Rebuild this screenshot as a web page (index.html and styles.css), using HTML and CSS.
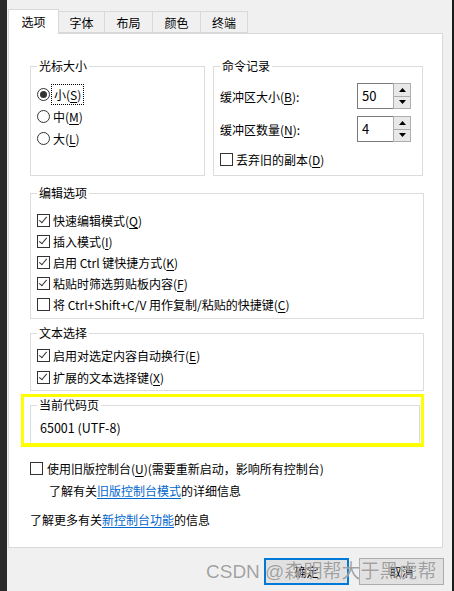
FILE: index.html
```html
<!DOCTYPE html>
<html lang="zh-CN">
<head>
  <meta charset="UTF-8">
  <title>属性 - 选项</title>
  <link rel="stylesheet" href="styles.css">
</head>
<body>
  <div class="screen">
    <div class="edge-left"></div>
    <div class="dialog">
      <!-- Tabs -->
      <div class="tabs">
        <div class="tab active">选项</div>
        <div class="tab w46">字体</div>
        <div class="tab w48">布局</div>
        <div class="tab w48">颜色</div>
        <div class="tab w47">终端</div>
      </div>

      <div class="panel">
        <div class="row-top">
          <!-- Cursor size -->
          <fieldset class="group cursor">
            <legend>光标大小</legend>
            <div class="group-body">
              <div class="opt"><span class="radio checked"></span><span class="focus">小(<u>S</u>)</span></div>
              <div class="opt"><span class="radio"></span><span>中(<u>M</u>)</span></div>
              <div class="opt"><span class="radio"></span><span>大(<u>L</u>)</span></div>
            </div>
          </fieldset>

          <!-- Command history -->
          <fieldset class="group history">
            <legend>命令记录</legend>
            <div class="group-body">
              <div class="spin-row">
                <span>缓冲区大小(<u>B</u>):</span>
                <div class="spin">
                  <div class="spin-input">50</div>
                  <div class="spin-btns">
                    <span class="spin-btn"><svg width="7" height="4" viewBox="0 0 7 4"><polygon points="3.5,0 7,4 0,4" fill="#000"/></svg></span>
                    <span class="spin-btn"><svg width="7" height="4" viewBox="0 0 7 4"><polygon points="0,0 7,0 3.5,4" fill="#000"/></svg></span>
                  </div>
                </div>
              </div>
              <div class="spin-row">
                <span>缓冲区数量(<u>N</u>):</span>
                <div class="spin">
                  <div class="spin-input">4</div>
                  <div class="spin-btns">
                    <span class="spin-btn"><svg width="7" height="4" viewBox="0 0 7 4"><polygon points="3.5,0 7,4 0,4" fill="#000"/></svg></span>
                    <span class="spin-btn"><svg width="7" height="4" viewBox="0 0 7 4"><polygon points="0,0 7,0 3.5,4" fill="#000"/></svg></span>
                  </div>
                </div>
              </div>
              <div class="opt discard"><span class="check"></span><span>丢弃旧的副本(<u>D</u>)</span></div>
            </div>
          </fieldset>
        </div>

        <!-- Edit options -->
        <fieldset class="group edit">
          <legend>编辑选项</legend>
          <div class="group-body">
            <div class="opt"><span class="check on"></span><span>快速编辑模式(<u>Q</u>)</span></div>
            <div class="opt"><span class="check on"></span><span>插入模式(<u>I</u>)</span></div>
            <div class="opt"><span class="check on"></span><span>启用 Ctrl 键快捷方式(<u>K</u>)</span></div>
            <div class="opt"><span class="check on"></span><span>粘贴时筛选剪贴板内容(<u>F</u>)</span></div>
            <div class="opt"><span class="check"></span><span>将 Ctrl+Shift+C/V 用作复制/粘贴的快捷键(<u>C</u>)</span></div>
          </div>
        </fieldset>

        <!-- Text selection -->
        <fieldset class="group select">
          <legend>文本选择</legend>
          <div class="group-body">
            <div class="opt"><span class="check on"></span><span>启用对选定内容自动换行(<u>E</u>)</span></div>
            <div class="opt"><span class="check on"></span><span>扩展的文本选择键(<u>X</u>)</span></div>
          </div>
        </fieldset>

        <!-- Code page (highlighted) -->
        <div class="highlight">
          <fieldset class="group codepage">
            <legend>当前代码页</legend>
            <div class="group-body">65001 (UTF-8)</div>
          </fieldset>
        </div>

        <div class="opt legacy"><span class="check"></span><span>使用旧版控制台(<u>U</u>)(需要重新启动，影响所有控制台)</span></div>
        <p class="info indent">了解有关<a href="#">旧版控制台模式</a>的详细信息</p>
        <p class="info">了解更多有关<a href="#">新控制台功能</a>的信息</p>
      </div>

      <div class="buttons">
        <button class="btn ok">确定</button>
        <button class="btn cancel">取消</button>
      </div>
    </div>
    <div class="edge-right"></div>
    <div class="watermark">CSDN @森明帮大于黑虎帮</div>
  </div>
</body>
</html>
```

FILE: styles.css
```css
body {
  margin: 0;
  background: #1f1f1f;
  font-family: "Noto Sans CJK SC", "Noto Sans", sans-serif;
  font-size: 12px;
  color: #000;
}

.screen {
  position: relative;
  display: flex;
  width: 454px;
  height: 591px;
  overflow: hidden;
}

.edge-left {
  width: 7px;
  background: #2a2a2a;
}

.edge-right {
  flex: 1;
  background: #1c1c1c;
}

.dialog {
  width: 445px;
  background: #f0f0f0;
  padding: 9px 0 0 1px;
  box-sizing: border-box;
}

/* Tabs */
.tabs {
  display: flex;
  align-items: flex-end;
  height: 25px;
  margin-bottom: -1px;
  position: relative;
  z-index: 1;
}

.tab {
  height: 22px;
  line-height: 21px;
  text-align: center;
  border: 1px solid #d9d9d9;
  border-left: none;
  border-bottom: 1px solid #d9d9d9;
  background: #f0f0f0;
  box-sizing: border-box;
  margin-bottom: 1px;

  &.active {
    width: 51px;
    height: 25px;
    line-height: 23px;
    background: #fff;
    border-left: 1px solid #d9d9d9;
    border-bottom: none;
    margin-bottom: 0;
  }

  &.w46 { width: 46px; }
  &.w48 { width: 48px; }
  &.w47 { width: 47px; }
}

/* Panel */
.panel {
  width: 435px;
  height: 515px;
  background: #fff;
  border: 1px solid #d9d9d9;
  box-sizing: border-box;
  padding: 24px 0 0 21px;
}

.row-top {
  display: flex;
  gap: 8px;
}

.group {
  margin: 0;
  padding: 0;
  min-width: 0;
  border: 1px solid #dcdcdc;
  box-sizing: border-box;

  legend {
    margin-left: 6px;
    padding: 0 2px;
    line-height: 16px;
  }

  .group-body {
    padding: 0 6px;
  }
}

.cursor {
  width: 175px;
  height: 118px;

  .group-body { padding-top: 9px; }
  .opt { height: 22px; }
}

.history {
  width: 210px;
  height: 118px;

  .group-body { padding: 9px 11px 0 6px; }
}

.edit {
  width: 394px;
  margin-top: 9px;

  .group-body { padding-top: 9px; padding-bottom: 3px; }
}

.select {
  width: 394px;
  margin-top: 6px;

  .group-body { padding-top: 3px; padding-bottom: 2px; }
  .opt { height: 22px; }
}

.highlight {
  width: 403px;
  margin: 3px 0 0 -9px;
  border: 3px solid #ffff00;
  border-bottom-width: 4px;
  padding: 0 1px 0 6px;
  box-sizing: border-box;
}

.codepage {
  width: 390px;
  border-bottom-color: transparent;

  .group-body {
    padding: 7px 9px 6px;
    line-height: 16px;
    font-size: 12.5px;
  }
}

/* Options */
.opt {
  display: flex;
  align-items: center;
  gap: 3px;
  height: 21px;
  white-space: nowrap;
}

u {
  text-decoration: underline;
  text-underline-offset: 2px;
}

.radio {
  width: 13px;
  height: 13px;
  border: 1px solid #333;
  border-radius: 50%;
  box-sizing: border-box;
  display: flex;
  align-items: center;
  justify-content: center;

  &.checked::after {
    content: "";
    width: 7px;
    height: 7px;
    border-radius: 50%;
    background: #333;
  }
}

.focus {
  outline: 1px dotted #000;
  outline-offset: 1px;
  padding: 0 1px;
}

.check {
  width: 13px;
  height: 13px;
  border: 1px solid #333;
  box-sizing: border-box;
  background: #fff;
  flex-shrink: 0;
  position: relative;

  &.on::after {
    content: "";
    position: absolute;
    left: 3px;
    top: 0px;
    width: 3px;
    height: 7px;
    border: solid #333;
    border-width: 0 1.3px 1.3px 0;
    transform: rotate(40deg);
  }
}

/* Spinners */
.spin-row {
  display: flex;
  align-items: center;
  justify-content: space-between;
  height: 26px;
  margin-bottom: 7px;
}

.spin {
  display: flex;
  height: 26px;
}

.spin-input {
  width: 36px;
  border: 1px solid #7a7a7a;
  border-right: none;
  box-sizing: border-box;
  padding-left: 4px;
  font-size: 13px;
  line-height: 24px;
}

.spin-btns {
  width: 18px;
  display: flex;
  flex-direction: column;
}

.spin-btn {
  flex: 1;
  display: flex;
  align-items: center;
  justify-content: center;
  background: #e8e8e8;
  border: 1px solid #adadad;
  box-sizing: border-box;

  & + .spin-btn { border-top: none; }
}

.discard {
  margin-top: 2px;
}

/* Bottom texts */
.legacy {
  margin-top: 13px;
  height: 16px;
  gap: 4px;
}

.info {
  margin: 13px 0 0;
  line-height: 16px;

  &.indent {
    margin: 7px 0 0 19px;
  }

  a {
    color: #0066cc;
    text-decoration: underline;
    text-underline-offset: 2px;
  }
}

/* Buttons */
.buttons {
  display: flex;
  justify-content: flex-end;
  gap: 10px;
  margin-top: 10px;
  padding-right: 8px;
}

.btn {
  height: 27px;
  font-family: inherit;
  font-size: 12px;
  background: #e1e1e1;
  border: 1px solid #adadad;
  padding: 0;

  &.ok {
    width: 85px;
    border: 2px solid #0078d7;
  }

  &.cancel {
    width: 85px;
  }
}

.watermark {
  position: absolute;
  left: 206px;
  top: 559px;
  font-family: "Liberation Sans", "Noto Sans CJK SC", sans-serif;
  font-size: 19px;
  line-height: 26px;
  color: rgba(120, 120, 120, 0.7);
  text-shadow: 0 0 1px rgba(255, 255, 255, 0.9);
  white-space: nowrap;
  pointer-events: none;
}
```
